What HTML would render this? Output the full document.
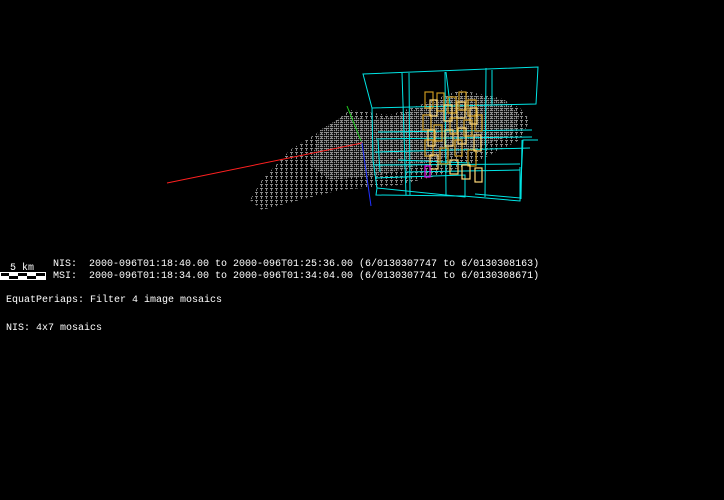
<!DOCTYPE html>
<html><head><style>
body{margin:0;background:#000;width:724px;height:500px;overflow:hidden;position:relative}
.t{position:absolute;font-family:"Liberation Mono",monospace;font-size:10px;color:#fff;white-space:pre;line-height:12px}
</style></head><body>
<svg width="724" height="500" style="position:absolute;left:0;top:0">
<defs>
<pattern id="d" width="2" height="2" patternUnits="userSpaceOnUse"><rect width="1.2" height="1.2" fill="#909090"/></pattern>
<pattern id="d2" width="5" height="4" patternUnits="userSpaceOnUse"><rect width="3" height="1" fill="#888"/><rect x="1" y="1" width="1" height="2" fill="#888"/></pattern>
</defs>
<polygon points="250,200 262,180 290,150 330,125 350,110 390,115 420,105 460,90 500,98 520,108 530,120 520,140 480,160 440,175 400,185 340,190 300,200 262,210" fill="url(#d2)"/>
<polygon points="320,130 345,115 370,120 400,115 440,100 470,95 505,100 520,115 512,135 470,150 420,165 380,175 330,180 310,165" fill="url(#d)"/>
<g fill="none" stroke="#00e5e5" stroke-width="1">
<path d="M363,74 L538,67 L536,104 L372,108 Z"/>
<path d="M372,108 L373,160 L377,188 L376,195 L463,196 L520,201 L523,140 L538,140"/>
<path d="M377,188 L465,197 L465,175 L375,178"/>
<path d="M376,139 L532,137 M375,152 L530,148 M378,132 L532,130"/>
<path d="M378,140 L380,172 M402,73 L406,195 M409,73 L410,195 M445,72 L446,195 M446,72 L450,104 M486,68 L485,197 M492,70 L492,104 M522,140 L521,199"/>
<path d="M375,165 L520,164 M398,160 L470,163 M405,172 L520,170"/>
<path d="M475,194 L520,198 L520,167"/>
</g>
<g fill="none" stroke-width="1.2">
<g stroke="#c8961e">
<rect x="425" y="92" width="8" height="16"/><rect x="437" y="93" width="7" height="18"/><rect x="448" y="97" width="8" height="16"/><rect x="459" y="92" width="7" height="18"/><rect x="468" y="100" width="8" height="16"/>
<rect x="423" y="115" width="8" height="15"/><rect x="434" y="125" width="8" height="16"/><rect x="450" y="118" width="7" height="16"/><rect x="464" y="120" width="8" height="16"/><rect x="475" y="115" width="7" height="16"/>
<rect x="425" y="140" width="8" height="16"/><rect x="440" y="148" width="8" height="16"/><rect x="455" y="140" width="7" height="16"/><rect x="468" y="150" width="8" height="16"/>
</g>
<g stroke="#ffd878">
<rect x="430" y="100" width="7" height="16"/><rect x="444" y="105" width="8" height="16"/><rect x="457" y="102" width="8" height="16"/><rect x="470" y="108" width="7" height="16"/>
<rect x="428" y="130" width="7" height="16"/><rect x="445" y="130" width="8" height="16"/><rect x="458" y="128" width="8" height="16"/><rect x="474" y="135" width="7" height="16"/>
<rect x="430" y="155" width="8" height="14"/><rect x="450" y="160" width="8" height="14"/><rect x="462" y="165" width="8" height="14"/><rect x="475" y="168" width="7" height="14"/>
</g>
<rect x="425" y="166" width="5" height="11" stroke="#e000e0"/>
</g>
<line x1="167" y1="183" x2="362" y2="143" stroke="#ff2020"/>
<line x1="347" y1="106" x2="361" y2="141" stroke="#20d020"/>
<line x1="362" y1="143" x2="371" y2="206" stroke="#2030ff"/>
<rect x="0" y="272" width="46" height="8" fill="#fff"/>
<rect x="1" y="273" width="8" height="3" fill="#000"/><rect x="9" y="276" width="9" height="3" fill="#000"/><rect x="18" y="273" width="9" height="3" fill="#000"/><rect x="27" y="276" width="9" height="3" fill="#000"/><rect x="36" y="273" width="9" height="3" fill="#000"/>
</svg>
<div class="t" style="left:10px;top:263px">5 km</div>
<div class="t" style="left:53px;top:259px">NIS:  2000-096T01:18:40.00 to 2000-096T01:25:36.00 (6/0130307747 to 6/0130308163)
MSI:  2000-096T01:18:34.00 to 2000-096T01:34:04.00 (6/0130307741 to 6/0130308671)</div>
<div class="t" style="left:6px;top:295px">EquatPeriaps: Filter 4 image mosaics</div>
<div class="t" style="left:6px;top:323px">NIS: 4x7 mosaics</div>
</body></html>
